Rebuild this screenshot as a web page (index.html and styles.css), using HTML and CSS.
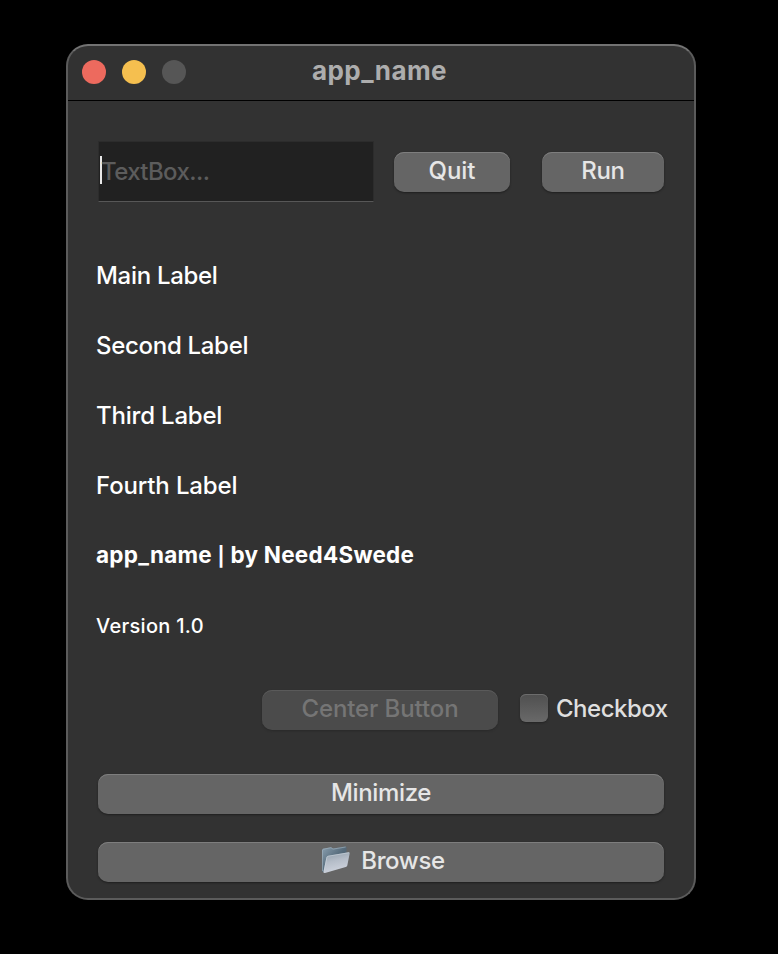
FILE: index.html
```html
<!DOCTYPE html>
<html lang="en">
<head>
<meta charset="utf-8">
<title>app_name</title>
<link rel="stylesheet" href="styles.css">
</head>
<body>
<main class="window">
  <header class="titlebar">
    <div class="lights"><i class="light close"></i><i class="light minimize"></i><i class="light zoom"></i></div>
    <h1 class="title">app_name</h1>
  </header>
  <section class="content">
    <div class="toolbar">
      <div class="textbox"><span class="caret"></span><span class="placeholder">TextBox...</span></div>
      <button class="button quit"><span>Quit</span></button>
      <button class="button run"><span>Run</span></button>
    </div>
    <div class="labels">
      <p><span class="main">Main Label</span></p>
      <p><span class="second">Second Label</span></p>
      <p><span class="third">Third Label</span></p>
      <p><span class="fourth">Fourth Label</span></p>
      <p class="credit">app_name <span class="bar">|</span> by Need4Swede</p>
      <p class="version">Version 1.0</p>
    </div>
    <div class="options">
      <button class="button center" disabled><span>Center Button</span></button>
      <div class="check"><i class="box"></i><span>Checkbox</span></div>
    </div>
    <button class="button wide"><span>Minimize</span></button>
    <button class="button wide browse">
      <svg class="folder" width="30" height="28" viewBox="0 0 30 28">
        <defs>
          <linearGradient id="back" x1="0" y1="0" x2="1" y2="1"><stop offset="0" stop-color="#8ba0b0"/><stop offset=".5" stop-color="#566b7b"/><stop offset="1" stop-color="#40505e"/></linearGradient>
          <linearGradient id="front" x1="0" y1="0" x2=".3" y2="1"><stop offset="0" stop-color="#8b9aa7"/><stop offset=".5" stop-color="#b5bdc8"/><stop offset="1" stop-color="#cdd2dc"/></linearGradient>
        </defs>
        <path d="M1 4Q1 3 2 2.800L10 1.200L12 2.600L24 .5L25.500 1V10L3 26.500L1 25.500Z" fill="url(#back)"/>
        <path d="M1.500 4V25M2 3.300L10 1.700L12 3.100L24.700 1" fill="none" stroke="#a4b5c1" stroke-width=".6"/>
        <path d="M5.500 11Q6 10 7.500 9.700L27.500 6.200Q29 6 28.700 7.300L26.300 19.500Q26 20.700 24.700 21L4 27Q2 27.200 2.500 25.500Z" fill="url(#front)"/>
        <path d="M3 25.500L6 11Q6.300 10.300 7.700 10.100L28 6.700" fill="none" stroke="#cbd5de" stroke-width=".6"/>
      </svg>
      <span>Browse</span>
    </button>
  </section>
</main>
</body>
</html>
```
FILE: styles.css
```css
* { box-sizing: border-box; }
body { margin: 0; padding: 44px 0 0 66px; background: #000; font: 450 24px/30px Inter, "Liberation Sans", sans-serif; letter-spacing: -.3px; color: #fff; }
.window { width: 630px; height: 856px; border: 2px solid #5b5b5b; border-top-color: #737373; border-radius: 22px; background: #323232; overflow: hidden; }
.titlebar { display: grid; grid-template-columns: 120px 1fr 120px; height: 55px; border-bottom: 1px solid #000; }
.lights { display: flex; gap: 16px; padding: 14px 0 0 14px; }
.light { width: 24px; height: 24px; border-radius: 50%; flex: none; }
.close { background: #ed6a5e; }
.minimize { background: #f5bf4f; }
.zoom { background: #565656; }
.title { margin: 10px 0 0 -3px; text-align: center; font-size: 26px; line-height: 30px; font-weight: 750; letter-spacing: .4px; color: #adadad; }
.content { display: flex; flex-direction: column; padding: 40px 30px 0; }
.toolbar { display: flex; height: 61px; }
.textbox { display: flex; align-items: center; width: 276px; height: 61px; background: #212121; border: 1px solid #2c2c2c; border-bottom-color: #575757; }
.caret { width: 2px; height: 28px; margin: -3px 0 0 1px; background: #e8e8e8; }
.placeholder { margin-left: -1px; letter-spacing: -.6px; color: #5c5c5c; }
.button { display: flex; justify-content: center; height: 40px; border: 0; border-radius: 10px; padding: 4px 0 0; background: #656565; color: #e6e6e6; font: inherit; letter-spacing: -.35px; box-shadow: inset 0 1px #7e7e7e, 0 1px 2px #1f1f1f; }
.quit { width: 116px; margin: 11px 0 0 20px; letter-spacing: 0; }
.run { width: 122px; margin: 11px 0 0 32px; }
.labels { display: flex; flex-direction: column; gap: 40px; margin: 59px 0 0 -2px; }
.labels p { margin: 0; height: 30px; white-space: nowrap; }
.third { letter-spacing: -.2px; }
.fourth { letter-spacing: -.15px; }
.labels .credit { font-weight: 750; font-size: 22.5px; letter-spacing: .25px; line-height: 28px; }
.bar { font-size: 19px; }
.labels .version { font-size: 20px; letter-spacing: .3px; }
.options { display: flex; height: 40px; margin: 49px -10px 44px 164px; }
.center { width: 236px; background: #4b4b4b; color: #757575; letter-spacing: -.1px; box-shadow: inset 0 1px #5a5a5a, 0 1px 2px #292929; }
.check { display: flex; gap: 8px; margin-left: 22px; padding-top: 4px; letter-spacing: -.5px; color: #dfdfdf; }
.box { width: 28px; height: 28px; flex: none; border-radius: 6px; background: linear-gradient(#4f4f4f, #696969); box-shadow: inset 0 1px #6c6c6c, 0 1px 2px #242424; }
.wide { width: 566px; margin-bottom: 28px; }
.browse { gap: 10px; padding-left: 4px; }
.folder { flex: none; }
```
